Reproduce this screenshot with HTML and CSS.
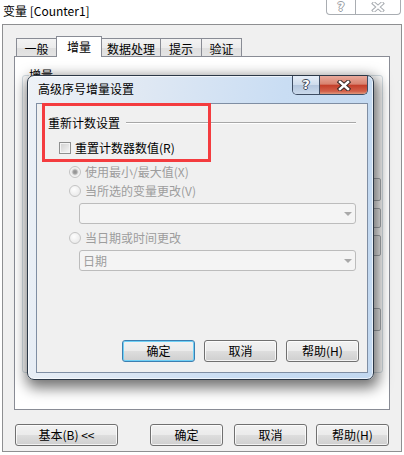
FILE: index.html
```html
<!DOCTYPE html>
<html lang="zh-CN">
<head>
    <meta charset="UTF-8">
    <meta name="viewport" content="width=device-width, initial-scale=1.0">
    <title>变量 [Counter1]</title>
    <link rel="stylesheet" href="styles.css">
</head>
<body>
    <!-- Outer window caption -->
    <div class="caption">
        <span class="caption-title">变量 [Counter1]</span>
        <div class="caption-btns">
            <span class="cap-btn cap-help">?</span>
            <span class="cap-btn cap-close">
                <svg width="14" height="10" viewBox="0 0 14 10">
                    <path d="M3 1.5 L11 8.5 M11 1.5 L3 8.5" stroke="#a9adb2" stroke-width="4" stroke-linecap="square"/>
                    <path d="M3 1.5 L11 8.5 M11 1.5 L3 8.5" stroke="#fff" stroke-width="2" stroke-linecap="square"/>
                </svg>
            </span>
        </div>
    </div>

    <div class="window">
        <div class="tabs">
            <div class="tab tab-general">一般</div>
            <div class="tab tab-increment active">增量</div>
            <div class="tab tab-data">数据处理</div>
            <div class="tab tab-hint">提示</div>
            <div class="tab tab-verify">验证</div>
        </div>

        <div class="tab-panel">
            <fieldset class="group">
                <legend>增量</legend>
                <div class="ghost ghost-1"></div>
                <div class="ghost ghost-2"></div>
                <div class="ghost ghost-3"></div>
                <div class="ghost ghost-4"></div>
            </fieldset>
        </div>

        <div class="footer">
            <button class="btn btn-basic">基本(B) &lt;&lt;</button>
            <button class="btn btn-ok">确定</button>
            <button class="btn btn-cancel">取消</button>
            <button class="btn btn-help">帮助(H)</button>
        </div>

        <!-- Modal dialog on top -->
        <div class="modal">
            <div class="modal-title">
                <span class="modal-title-text">高级序号增量设置</span>
                <div class="modal-caps">
                    <span class="mcap mcap-help">?</span>
                    <span class="mcap mcap-close">
                        <svg width="16" height="11" viewBox="0 0 16 11">
                            <path d="M4 2 L12 9 M12 2 L4 9" stroke="#3a2a28" stroke-width="4.5" stroke-linecap="square"/>
                            <path d="M4 2 L12 9 M12 2 L4 9" stroke="#fff" stroke-width="2.5" stroke-linecap="square"/>
                        </svg>
                    </span>
                </div>
            </div>

            <div class="modal-body">
                <div class="section-head">
                    <span>重新计数设置</span>
                    <span class="section-line"></span>
                </div>

                <label class="check-row">
                    <span class="checkbox"></span>
                    <span class="opt-label">重置计数器数值(R)</span>
                </label>

                <div class="radio-row">
                    <span class="radio checked"></span>
                    <span class="opt-label disabled">使用最小/最大值(X)</span>
                </div>
                <div class="radio-row radio-tight">
                    <span class="radio"></span>
                    <span class="opt-label disabled">当所选的变量更改(V)</span>
                </div>
                <div class="combo">
                    <span class="combo-text"></span>
                    <span class="combo-arrow"></span>
                </div>
                <div class="radio-row radio-after-combo">
                    <span class="radio"></span>
                    <span class="opt-label disabled">当日期或时间更改</span>
                </div>
                <div class="combo">
                    <span class="combo-text">日期</span>
                    <span class="combo-arrow"></span>
                </div>

                <div class="modal-buttons">
                    <button class="btn btn-default">确定</button>
                    <button class="btn">取消</button>
                    <button class="btn">帮助(H)</button>
                </div>

                <!-- red highlight annotation -->
                <div class="highlight"></div>
            </div>
        </div>
    </div>
</body>
</html>
```

FILE: styles.css
```css
* { box-sizing: border-box; }

body {
    margin: 0;
    width: 404px;
    height: 455px;
    overflow: hidden;
    background: #fff;
    color: #000;
    font-family: "Noto Sans CJK SC", "Microsoft YaHei", sans-serif;
    font-size: 12px;
    line-height: 16px;
}

/* Outer caption */
.caption { display: flex; height: 24px; }
.caption-title { padding: 3px 0 0 3px; }
.caption-btns {
    display: flex;
    margin-left: auto;
    margin-right: 3px;
    width: 75px;
    height: 15px;
    border: 1px solid #a9adb2;
    border-top: none;
    border-radius: 0 0 4px 4px;
}
.cap-btn { display: flex; align-items: center; justify-content: center; }
.cap-help {
    width: 29px;
    border-right: 1px solid #a9adb2;
    font-family: "DejaVu Sans", sans-serif;
    font-weight: bold;
    font-size: 12px;
    color: #fff;
    text-shadow: 1px 0 #9a9ea3, -1px 0 #9a9ea3, 0 1px #9a9ea3, 0 -1px #9a9ea3;
}
.cap-close { flex: 1; }

/* Outer window */
.window {
    position: relative;
    margin-left: 2px;
    width: 400px;
    height: 428px;
    border: 1px solid #8e8f91;
    background: #f0f0f0;
    padding: 11px 0 0 11px;
}

/* Tabs */
.tabs { display: flex; align-items: flex-end; height: 20px; margin-left: 2px; }
.tab {
    height: 18px;
    margin-right: -1px;
    border: 1px solid #898c95;
    border-bottom: none;
    background: linear-gradient(#f3f3f3, #ececec 50%, #dfdfdf 50%, #e4e4e4);
    text-align: center;
    line-height: 17px;
    padding-top: 1px;
}
.tab.active {
    position: relative;
    z-index: 1;
    height: 21px;
    margin-bottom: -1px;
    background: #fff;
    line-height: 16px;
    padding-top: 2px;
}
.tab-general { width: 41px; }
.tab-increment { width: 46px; }
.tab-data { width: 60px; }
.tab-hint { width: 42px; }
.tab-verify { width: 41px; }

.tab-panel {
    width: 376px;
    height: 354px;
    border: 1px solid #898c95;
    background: #fff;
}

/* Group behind the modal */
.group {
    display: flex;
    flex-direction: column;
    align-items: flex-end;
    height: 306px;
    margin: 10px 6px 0 7px;
    padding: 0 0 0 6px;
    border: 1px solid #d5dfe5;
    border-radius: 3px;
}
.group legend { padding: 0; line-height: 16px; }
.ghost {
    width: 60px;
    margin-right: 1px;
    border: 1px solid #aeb2b6;
    border-radius: 2px;
    background: #f4f4f4;
}
.ghost-1 { height: 23px; margin-top: 95px; }
.ghost-2 { height: 20px; margin-top: 7px; }
.ghost-3 { height: 21px; margin-top: 7px; }
.ghost-4 { height: 23px; margin-top: 52px; }

/* Buttons */
.btn {
    width: 73px;
    height: 22px;
    padding: 0;
    border: 1px solid #707070;
    border-radius: 3px;
    background: linear-gradient(#f2f2f2 0%, #ebebeb 48%, #dddddd 52%, #cfcfcf 100%);
    box-shadow: inset 0 0 0 1px rgba(255, 255, 255, 0.75);
    font: inherit;
    color: #000;
}
.btn-default {
    border-color: #3c7fb1;
    box-shadow: inset 0 0 0 1px #6fd0f6;
}

.footer { display: flex; margin-top: 14px; }
.btn-basic { width: 103px; margin-left: 1px; }
.btn-ok { margin-left: 32px; }
.btn-cancel { margin-left: 11px; }
.btn-help { margin-left: 9px; }

/* Modal dialog */
.modal {
    position: absolute;
    left: 24px;
    top: 50px;
    width: 347px;
    height: 305px;
    display: flex;
    flex-direction: column;
    padding: 0 5px 6px 8px;
    border: 1px solid #2c3847;
    border-radius: 7px;
    background: linear-gradient(100deg, #eef2f7 0%, #dfe8f3 30%, #c9ddf3 65%, #c2d8f0 100%);
    box-shadow: inset 0 0 0 1px rgba(255, 255, 255, 0.65), 2px 5px 14px 3px rgba(0, 0, 0, 0.55);
}
.modal-title { display: flex; height: 27px; flex: none; }
.modal-title-text { padding: 5px 0 0 2px; }
.modal-caps {
    display: flex;
    margin-left: auto;
    height: 19px;
    border: 1px solid #3e4d63;
    border-top: none;
    border-radius: 0 0 5px 5px;
    overflow: hidden;
}
.mcap { display: flex; align-items: center; justify-content: center; }
.mcap-help {
    width: 27px;
    border-right: 1px solid #3e4d63;
    background: linear-gradient(#e6eef8, #cfdcec 48%, #b4c6dd 52%, #cbdaec);
    font-family: "DejaVu Sans", sans-serif;
    font-weight: bold;
    font-size: 13px;
    color: #fff;
    text-shadow: 1px 0 #3b4656, -1px 0 #3b4656, 0 1px #3b4656, 0 -1px #3b4656;
}
.mcap-close {
    width: 47px;
    background: linear-gradient(#e9aa9c, #d8826f 45%, #c43f2a 52%, #d2604a 85%, #e09a7e);
}

.modal-body {
    position: relative;
    flex: 1;
    display: flex;
    flex-direction: column;
    border: 1px solid #7f8ea3;
    background: #f0f0f0;
}

.section-head {
    display: flex;
    align-items: center;
    height: 16px;
    margin-top: 11px;
    padding-left: 11px;
}
.section-line {
    flex: 1;
    height: 2px;
    margin: 0 11px 0 6px;
    border-top: 1px solid #a7a7a7;
    border-bottom: 1px solid #fff;
}

.check-row { display: flex; align-items: center; height: 16px; margin-top: 9px; padding-left: 22px; }
.checkbox {
    width: 12px;
    height: 12px;
    border: 1px solid #8e8f8f;
    background: linear-gradient(135deg, #cfcfcf, #f7f7f7);
    box-shadow: inset 0 0 0 1px #f4f4f4;
}
.opt-label { margin-left: 4px; }
.opt-label.disabled { color: #9d9d9d; }

.radio-row { display: flex; align-items: center; height: 16px; margin-top: 8px; padding-left: 32px; }
.radio-tight { margin-top: 3px; }
.radio-after-combo { margin-top: 6px; }
.radio {
    width: 12px;
    height: 12px;
    border-radius: 50%;
    border: 1px solid #c4c4c4;
    background: radial-gradient(circle at 40% 35%, #fdfdfd, #e4e4e4);
}
.radio.checked {
    background: radial-gradient(circle, #8d8d8d 0, #a5a5a5 2px, #d9d9d9 3px, #f2f2f2 4px);
}

.combo {
    display: flex;
    align-items: center;
    justify-content: space-between;
    height: 21px;
    margin: 4px 11px 0 42px;
    padding: 0 3px 0 3px;
    border: 1px solid #bcbcbc;
    border-radius: 3px;
    background: #f4f4f4;
    color: #9d9d9d;
}
.combo-arrow {
    width: 0;
    height: 0;
    border-left: 4px solid transparent;
    border-right: 4px solid transparent;
    border-top: 4px solid #a9a9a9;
}

.modal-buttons {
    display: flex;
    justify-content: flex-end;
    gap: 9px;
    margin-top: auto;
    padding: 0 8px 10px 0;
}

.highlight {
    position: absolute;
    left: 5px;
    top: -1px;
    width: 169px;
    height: 59px;
    border: 3px solid #f43c3f;
}
```
